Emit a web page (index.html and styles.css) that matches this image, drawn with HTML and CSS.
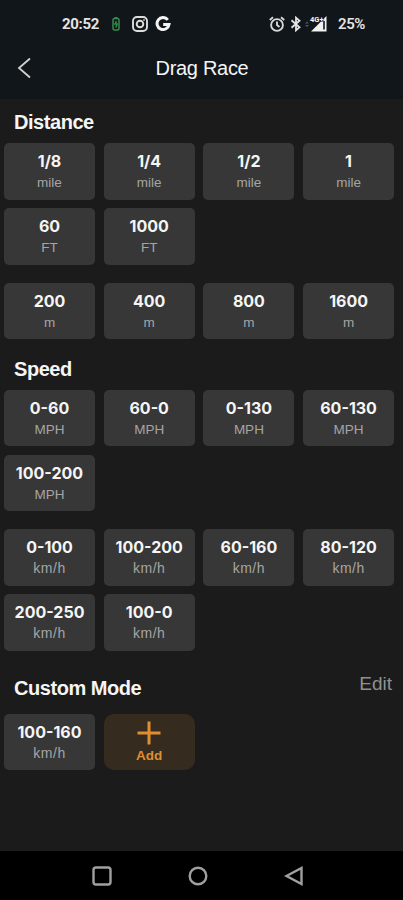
FILE: index.html
```html
<!DOCTYPE html>
<html lang="en">
<head>
    <meta charset="UTF-8">
    <meta name="viewport" content="width=device-width, initial-scale=1.0">
    <title>Drag Race</title>
    <link rel="stylesheet" href="styles.css">
</head>
<body>

<div class="status-bar">
    <div class="status-left">
        <span class="clock">20:52</span>
        <svg class="battery" width="8" height="14" viewBox="0 0 8 14" fill="none" stroke="#348d4b" stroke-width="1.5">
            <rect x="1" y="1.5" width="6" height="11.5" rx="1.5"/>
            <path d="M2.5 .8h3M4.4 4L3 7h2.2L3.8 10.5"/>
        </svg>
        <svg class="camera" width="16" height="16" viewBox="0 0 16 16" fill="none" stroke="#dcdcdc" stroke-width="1.9">
            <rect x="1" y="1" width="14" height="14" rx="4"/>
            <circle cx="8" cy="8" r="3.3"/>
            <circle cx="12" cy="4" r=".5" stroke-width="1"/>
        </svg>
        <svg class="google" width="16" height="16" viewBox="0 0 16 16" fill="none" stroke="#f4f4f4" stroke-width="3">
            <path d="M12.8 3.8A6 6 0 1 0 14 8.4H8.2"/>
        </svg>
    </div>
    <div class="status-right">
        <svg class="alarm" width="16" height="16" viewBox="0 0 16 16" fill="none" stroke="#d8d8d8" stroke-width="1.9">
            <circle cx="8" cy="9" r="5.9"/>
            <path d="M.8 3.9L4 1.2M15.2 3.9L12 1.2M8 5.5V9l2.5 2"/>
        </svg>
        <svg class="bluetooth" width="12" height="16" viewBox="0 0 12 16" fill="none" stroke="#e4e4e4" stroke-width="1.8">
            <path d="M1.5 4.2l8 7L6 14.3V1.7l3.5 3.1-8 7"/>
        </svg>
        <svg class="signal" width="24" height="16" viewBox="0 0 24 16">
            <path d="M1 7.5l2-2 2 2zM1 9l2 2 2-2z" fill="#555"/>
            <path d="M7 15.5L22.5 0v15.5z" fill="#f2f2f2"/>
            <path d="M20 5v8.5" stroke="#11161a" stroke-width="1.6"/>
            <text x="6" y="6" class="network">4G+</text>
        </svg>
        <span class="percent">25%</span>
    </div>
</div>

<div class="title-bar">
    <svg class="back" width="16" height="22" viewBox="0 0 16 22" fill="none" stroke="#d0d0d0" stroke-width="1.8">
        <path d="M13 1.5L2 11l11 9.5"/>
    </svg>
    <h1>Drag Race</h1>
</div>

<div class="content">
    <h2>Distance</h2>
    <div class="grid">
        <div class="card"><b>1/8</b><span>mile</span></div>
        <div class="card"><b>1/4</b><span>mile</span></div>
        <div class="card"><b>1/2</b><span>mile</span></div>
        <div class="card"><b>1</b><span>mile</span></div>
        <div class="card"><b>60</b><span>FT</span></div>
        <div class="card"><b>1000</b><span>FT</span></div>
    </div>
    <div class="grid metric">
        <div class="card"><b>200</b><span>m</span></div>
        <div class="card"><b>400</b><span>m</span></div>
        <div class="card"><b>800</b><span>m</span></div>
        <div class="card"><b>1600</b><span>m</span></div>
    </div>

    <h2 class="speed-title">Speed</h2>
    <div class="grid">
        <div class="card"><b>0-60</b><span>MPH</span></div>
        <div class="card"><b>60-0</b><span>MPH</span></div>
        <div class="card"><b>0-130</b><span>MPH</span></div>
        <div class="card"><b>60-130</b><span>MPH</span></div>
        <div class="card"><b>100-200</b><span>MPH</span></div>
    </div>
    <div class="grid metric">
        <div class="card"><b>0-100</b><span class="kmh">km/h</span></div>
        <div class="card"><b>100-200</b><span class="kmh">km/h</span></div>
        <div class="card"><b>60-160</b><span class="kmh">km/h</span></div>
        <div class="card"><b>80-120</b><span class="kmh">km/h</span></div>
        <div class="card"><b>200-250</b><span class="kmh">km/h</span></div>
        <div class="card"><b>100-0</b><span class="kmh">km/h</span></div>
    </div>

    <div class="custom-header">
        <h2>Custom Mode</h2>
        <span class="edit">Edit</span>
    </div>
    <div class="grid">
        <div class="card"><b>100-160</b><span class="kmh">km/h</span></div>
        <div class="card add">
            <svg width="24" height="24" viewBox="0 0 24 24" stroke="#df8f31" stroke-width="3">
                <path d="M12 .5v23M.5 12h23"/>
            </svg>
            <span>Add</span>
        </div>
    </div>
</div>

<div class="nav-bar">
    <svg width="20" height="20" viewBox="0 0 20 20"><rect x="1.5" y="1.5" width="17" height="17" rx="2.5"/></svg>
    <svg width="20" height="20" viewBox="0 0 20 20"><circle cx="10" cy="10" r="8.3"/></svg>
    <svg width="20" height="20" viewBox="0 0 20 20"><path d="M17.5 2v16L2.5 10z"/></svg>
</div>

</body>
</html>
```
FILE: styles.css
```css
* {
    box-sizing: border-box;
}
body {
    margin: 0;
    height: 900px;
    display: flex;
    flex-direction: column;
    overflow: hidden;
    background-color: #1b1b1b;
    color: #f5f5f5;
    font-family: "Liberation Sans", Arial, sans-serif;
}
svg {
    display: block;
    flex: none;
}
.status-bar {
    height: 48px;
    padding: 0 38px 0 62px;
    display: flex;
    justify-content: space-between;
    align-items: center;
    background-color: #11161a;
}
.status-left,
.status-right {
    display: flex;
    align-items: center;
    color: #e4e4e4;
    font-family: Roboto, sans-serif;
    font-size: 15px;
    font-weight: 700;
}
.clock {
    width: 50px;
    letter-spacing: -0.3px;
}
.camera {
    margin-left: 12px;
}
.google {
    margin-left: 7px;
}
.bluetooth {
    margin-left: 5px;
}
.signal {
    margin-left: 2px;
}
.network {
    font-size: 7.5px;
    font-weight: 700;
    fill: #f2f2f2;
    stroke: #11161a;
    stroke-width: 1px;
    paint-order: stroke;
}
.percent {
    margin-left: 10px;
    font-weight: 600;
    letter-spacing: -0.4px;
}
.title-bar {
    height: 51px;
    display: flex;
    align-items: center;
    padding: 0 17px 11px;
    background-color: #11161a;
}
h1 {
    flex: 1;
    margin: 0 15px 0 0;
    text-align: center;
    font-size: 20px;
    font-weight: 400;
    letter-spacing: -0.3px;
}
.content {
    flex: 1;
    padding: 10px 4px 0;
}
h2 {
    margin: 0;
    padding-left: 10px;
    height: 34px;
    line-height: 26px;
    font-size: 20px;
    font-weight: 700;
    letter-spacing: -0.45px;
}
.grid {
    display: grid;
    grid-template-columns: repeat(4, 91px);
    grid-auto-rows: 56.5px;
    gap: 8.7px;
}
.metric {
    margin-top: 18px;
}
.speed-title {
    margin-top: 16.4px;
}
.card {
    display: flex;
    flex-direction: column;
    align-items: center;
    padding-top: 8px;
    border-radius: 5px;
    background-color: #373737;
}
.card b {
    font-family: Inter, sans-serif;
    font-size: 16px;
    font-weight: 700;
    line-height: 21px;
}
.card span {
    color: #a5a5a5;
    font-size: 13.5px;
    line-height: 21px;
}
.card .kmh {
    font-size: 14px;
    letter-spacing: 0.5px;
}
.custom-header {
    display: flex;
    justify-content: space-between;
    height: 39px;
    margin-top: 24px;
    padding-right: 7px;
}
.edit {
    margin-top: -4px;
    color: #909090;
    font-size: 19px;
    line-height: 26px;
}
.card.add {
    padding-top: 6.6px;
    border-radius: 10px;
    background-color: #352b1f;
}
.card.add span {
    color: #df8f31;
    font-size: 13.5px;
    font-weight: 700;
}
.nav-bar {
    height: 49px;
    display: flex;
    justify-content: center;
    gap: 76px;
    padding: 15px 7px 0 0;
    background-color: #000;
}
.nav-bar svg {
    fill: none;
    stroke: #a0a0a0;
    stroke-width: 2.4;
}
```
